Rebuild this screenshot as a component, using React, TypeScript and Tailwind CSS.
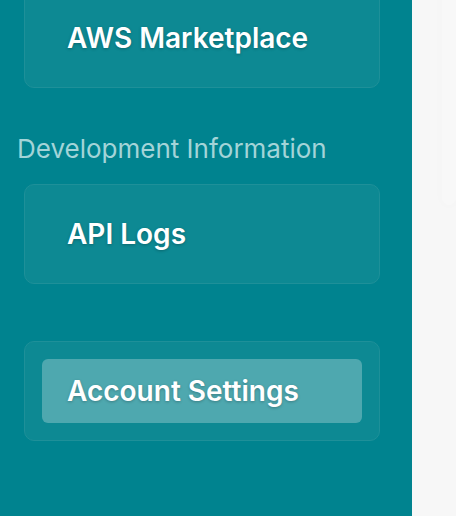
import React from "react";

function NavCard({ label, active = false }: { label: string; active?: boolean }) {
  return (
    <div className="w-[356px] ml-[24px] rounded-[10px] border border-[#1e9099] bg-[#0d8993] p-[17px]">
      <div
        className={
          "h-[64px] rounded-[6px] flex items-center pl-[25px] " +
          (active ? "bg-[#4ea8af]" : "")
        }
      >
        <span className="text-[28px] font-semibold text-white leading-none [text-shadow:0_1px_3px_rgba(0,0,0,0.25)]">
          {label}
        </span>
      </div>
    </div>
  );
}

export default function App() {
  return (
    <div
      className="w-[456px] h-[516px] flex overflow-hidden bg-[#f7f7f7]"
      style={{ fontFamily: "Inter, 'Noto Sans', sans-serif" }}
    >
      <aside className="w-[412px] h-full shrink-0 bg-[#00838f] overflow-hidden">
        <div className="-mt-[12px] flex flex-col">
          <NavCard label="AWS Marketplace" />
          <div className="mt-[43px] mb-[17px] pl-[17px] text-[26px] leading-[36px] text-[#a3d4d8]">
            Development Information
          </div>
          <NavCard label="API Logs" />
          <div className="mt-[57px]">
            <NavCard label="Account Settings" active />
          </div>
        </div>
      </aside>
      <main className="flex-1 pl-[30px] -mt-[20px]">
        <div className="h-[225px] rounded-[24px] bg-[#f8f8f8] shadow-[0_2px_16px_rgba(0,0,0,0.015)]" />
      </main>
    </div>
  );
}
